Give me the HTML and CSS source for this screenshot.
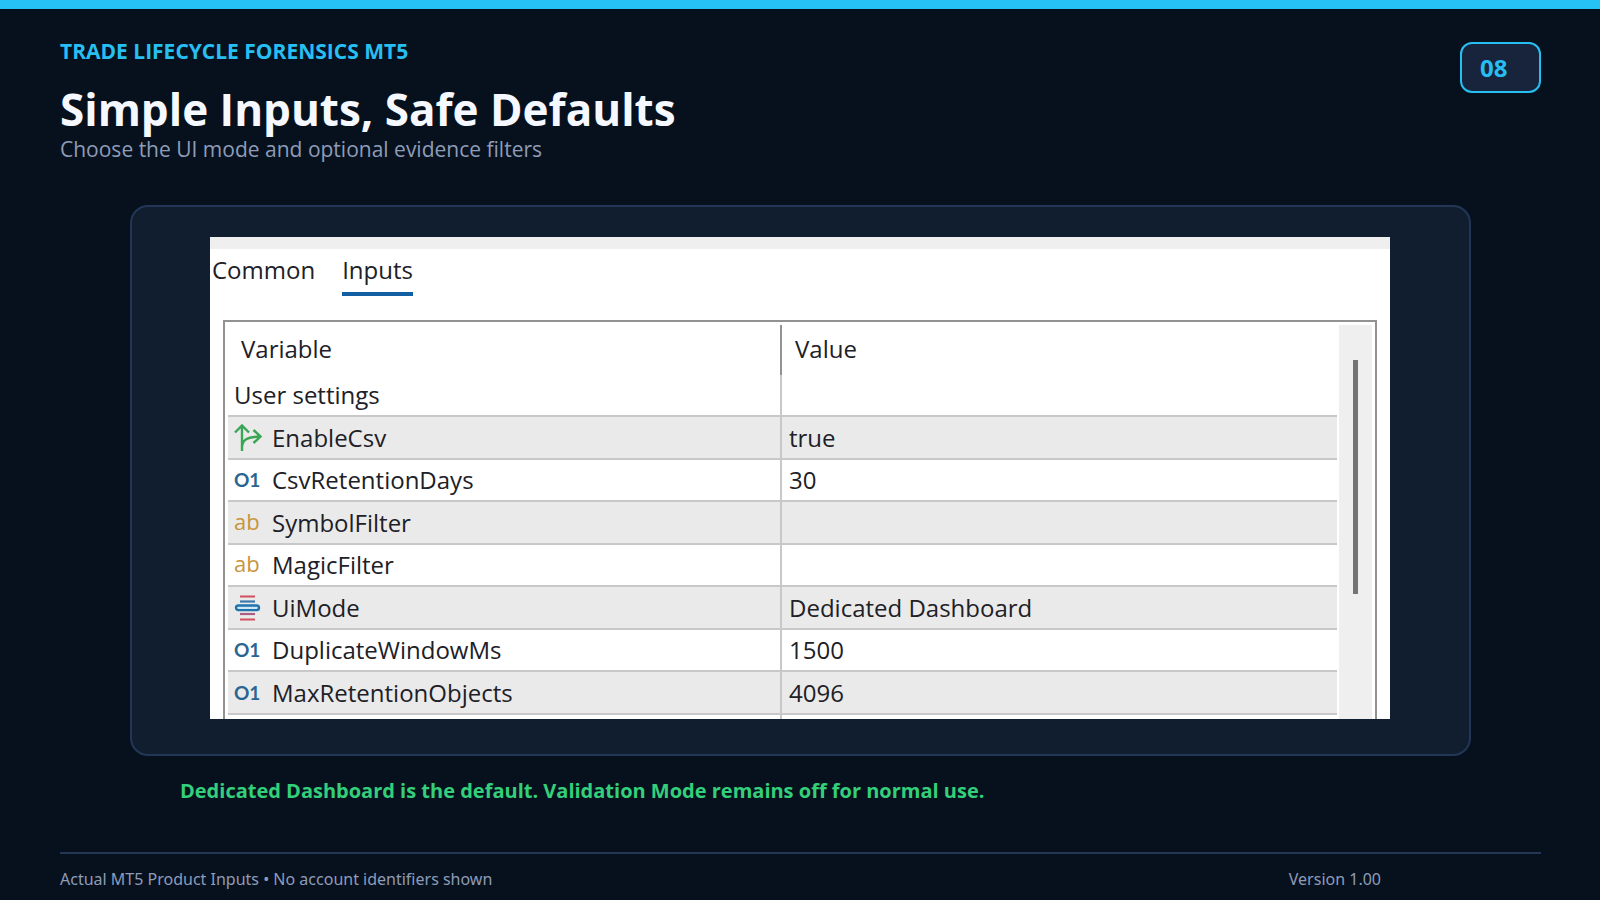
FILE: index.html
```html
<!DOCTYPE html>
<html lang="en">
<head>
<meta charset="utf-8">
<title>Trade Lifecycle Forensics MT5</title>
<link rel="stylesheet" href="styles.css">
</head>
<body>
<div class="slide">
  <header class="header">
    <div class="heading">
      <p class="eyebrow">TRADE LIFECYCLE FORENSICS MT5</p>
      <h1 class="title">Simple Inputs, Safe Defaults</h1>
      <p class="subtitle">Choose the UI mode and optional evidence filters</p>
    </div>
    <span class="badge">08</span>
  </header>

  <main class="main">
    <section class="panel">
      <div class="dialog">
        <nav class="tabs">
          <button type="button" class="tab">Common</button>
          <button type="button" class="tab tab-active">Inputs</button>
        </nav>
        <div class="frame">
          <table class="inputs">
            <colgroup><col class="col-name"><col></colgroup>
            <thead>
              <tr><th scope="col">Variable</th><th scope="col">Value</th></tr>
            </thead>
            <tbody>
              <tr class="group"><td>User settings</td><td></td></tr>
              <tr><td><span class="name"><svg class="icon" viewBox="0 0 28 28"><g fill="none" stroke="#3aa655" stroke-width="2.4"><path d="M8 27V2M1 8.500L8 1.500L15 8.500M8 24C8 16 12 13 26 12.500M19.500 6L26.500 12.500L19.500 19"/></g></svg>EnableCsv</span></td><td>true</td></tr>
              <tr><td><span class="name"><span class="icon glyph-num">O1</span>CsvRetentionDays</span></td><td>30</td></tr>
              <tr><td><span class="name"><span class="icon glyph-text">ab</span>SymbolFilter</span></td><td></td></tr>
              <tr><td><span class="name"><span class="icon glyph-text">ab</span>MagicFilter</span></td><td></td></tr>
              <tr><td><span class="name"><svg class="icon" viewBox="0 0 28 28"><path d="M6 2.500H21M6 25.500H21" stroke="#d0505f" stroke-width="2.200"/><path d="M6 7.500H21" stroke="#3a78ad" stroke-width="2.200"/><path d="M6 20H21" stroke="#a85d84" stroke-width="2.200"/><rect x="2" y="11.500" width="23" height="4.600" rx="2.300" fill="#cfe6f5" stroke="#1f73ae" stroke-width="2.400"/></svg>UiMode</span></td><td>Dedicated Dashboard</td></tr>
              <tr><td><span class="name"><span class="icon glyph-num">O1</span>DuplicateWindowMs</span></td><td>1500</td></tr>
              <tr><td><span class="name"><span class="icon glyph-num">O1</span>MaxRetentionObjects</span></td><td>4096</td></tr>
              <tr class="cut"><td></td><td></td></tr>
            </tbody>
          </table>
          <div class="scroll"><div class="thumb"></div></div>
        </div>
      </div>
    </section>
    <p class="note">Dedicated Dashboard is the default. Validation Mode remains off for normal use.</p>
  </main>

  <footer class="footer">
    <span>Actual MT5 Product Inputs • No account identifiers shown</span>
    <span>Version 1.00</span>
  </footer>
</div>
</body>
</html>
```

FILE: styles.css
```css
* { box-sizing: border-box; }
body, p, h1 { margin: 0; }
body {
  background: #07111e;
  color: #f5f8ff;
  font-family: "Open Sans", "Noto Sans", sans-serif;
}
.slide {
  display: flex;
  flex-direction: column;
  min-height: 100vh;
  border-top: 9px solid #27c2f5;
}
.header {
  display: flex;
  justify-content: space-between;
  align-items: flex-start;
  padding: 26px 59px 0 60px;
}
.eyebrow { color: #27bff2; font-size: 21px; line-height: 32px; font-weight: 700; }
.title { margin-top: 18px; font-size: 44px; line-height: 48px; font-weight: 700; }
.subtitle { color: #8e9cb8; font-size: 21px; line-height: 32px; }
.badge {
  width: 81px;
  height: 51px;
  margin-top: 7px;
  padding-left: 18px;
  border: 2px solid #27bff2;
  border-radius: 12px;
  background: #17243b;
  color: #27bff2;
  font-size: 24px;
  line-height: 47px;
  font-weight: 700;
}
.main { padding: 40px 129px 0 130px; }
.panel {
  padding: 30px 79px 35px 78px;
  border: 2px solid #233656;
  border-radius: 18px;
  background: #111e30;
}
.dialog {
  height: 482px;
  overflow: hidden;
  padding: 0 13px;
  border-top: 12px solid #efefef;
  background: #fff;
  color: #202026;
  font-size: 24px;
}
.tabs { display: flex; gap: 27px; margin-left: -11px; }
.tab {
  height: 47px;
  padding: 0 0 2px;
  border: 0;
  border-bottom: 4px solid transparent;
  background: none;
  color: inherit;
  font: inherit;
  line-height: 40px;
}
.tab-active { border-color: #125fa3; }
.frame {
  display: flex;
  justify-content: space-between;
  height: 420px;
  margin-top: 24px;
  padding: 3px 3px 0;
  border: 2px solid #929292;
}
.inputs {
  flex: 1;
  margin-right: 2px;
  border-collapse: separate;
  border-spacing: 0;
  table-layout: fixed;
}
.col-name { width: 554px; }
.inputs th, .inputs td { padding: 0 0 0 7px; text-align: left; font-weight: 400; line-height: 38px; white-space: nowrap; }
.inputs td:first-child { padding-left: 6px; }
.inputs th { height: 50px; padding: 0 0 2px 13px; }
.inputs td { height: 42px; border-bottom: 2px solid #c8c8c8; }
.inputs tr:nth-child(even) td { height: 43px; background: #eaeaea; }
.inputs th:first-child { border-right: 2px solid #929292; }
.inputs td:first-child { border-right: 2px solid #c8c8c8; }
.inputs .cut td { border-bottom: 0; }
.name { display: flex; align-items: center; gap: 10px; }
.icon { flex: none; width: 28px; height: 28px; line-height: 28px; }
.glyph-num { color: #2a6592; font-family: Lato, sans-serif; font-size: 19px; font-weight: 700; }
.glyph-text { color: #c8943c; font-size: 22px; line-height: 24px; }
.scroll { width: 33px; padding: 35px 14px 0; background: #efefef; }
.thumb { width: 5px; height: 234px; background: #747474; }
.note {
  margin: 19px 0 0 50px;
  color: #33cf7a;
  font-size: 20px;
  line-height: 32px;
  font-weight: 700;
}
.footer {
  display: flex;
  justify-content: space-between;
  margin: auto 59px 0 60px;
  padding: 13px 160px 9px 0;
  border-top: 2px solid #233656;
  color: #8e9cb8;
  font-family: "Noto Sans", sans-serif;
  font-size: 16px;
  line-height: 24px;
}
```
